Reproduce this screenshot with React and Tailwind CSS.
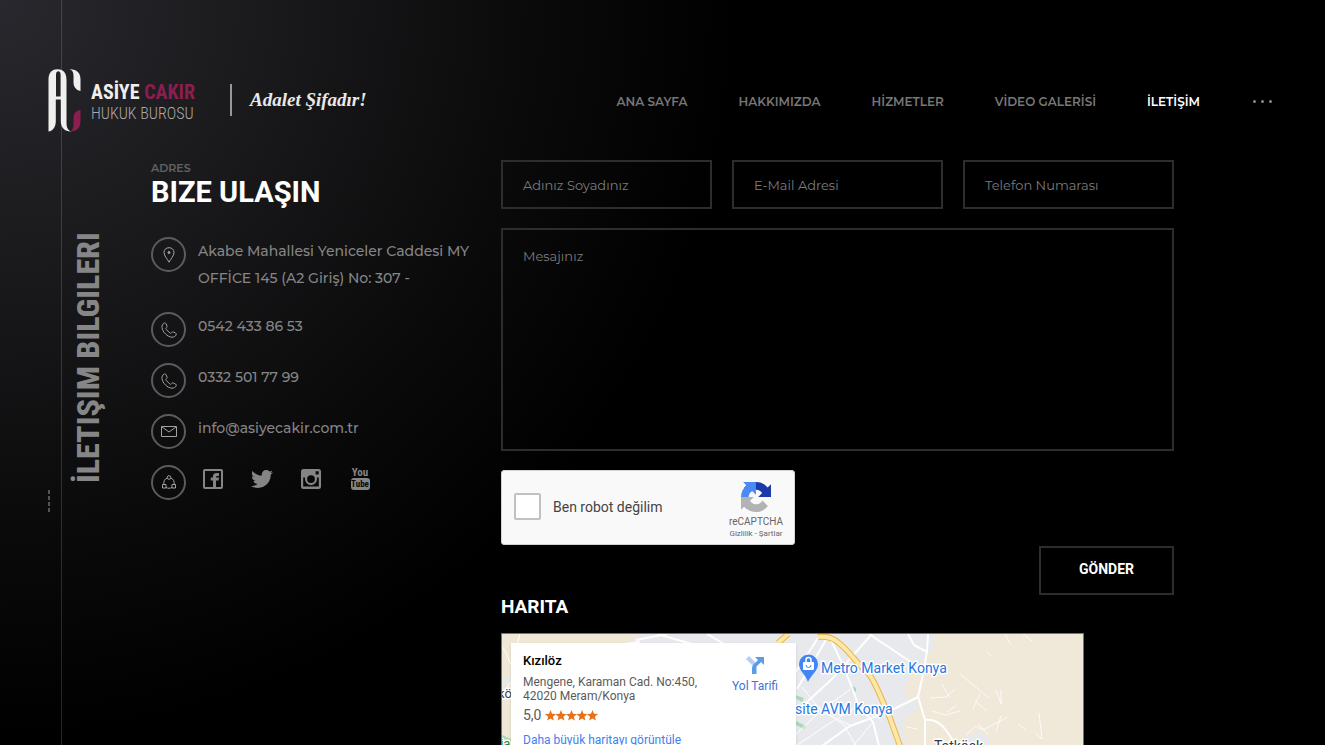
import React from "react";
import { FaTwitter } from "react-icons/fa";

const NAV = ["ANA SAYFA", "HAKKIMIZDA", "HİZMETLER", "VİDEO GALERİSİ", "İLETİŞİM"];

const condensed = "font-['Roboto_Condensed','Liberation_Sans_Narrow','Roboto',sans-serif]";
const field =
  "block w-full min-w-0 border-2 border-[#2d2d2d] bg-transparent px-5 text-[13px] text-[#8a8a8a] placeholder:text-[#7c7c7c] placeholder:opacity-100 outline-none";

function LogoMark() {
  return (
    <svg width="33" height="64" viewBox="0 0 33 64" aria-hidden="true">
      <path
        fill="#efefed"
        fillRule="evenodd"
        d="M.500 12C.500 4.500 4 1.300 9.500 1.300S18.500 4.500 18.500 12V55C18.500 59.500 20 62.500 23.500 63.500C17 63.800 12.800 60 12.800 53V31.500H7.800V53C7.800 59 5 63 .500 63.500ZM8 7V28.500H12.600V7C12.600 4 11.500 3.300 10.300 3.300S8 4 8 7Z"
      />
      <path d="M21.500 1.300C28.500 1 32.500 5 32.500 11V23C28 22 25.500 19 25.500 14V7.500C25.500 4 24 2 21.500 1.300Z" fill="#efefed" />
      <path d="M32.500 42V52C32.500 59.500 29.500 63.300 22.500 63.500C24.500 62 25.500 59.500 25.500 56V50C25.500 45.500 28 42.500 32.500 42Z" fill="#8c1d4f" />
    </svg>
  );
}

function Ring({ children }) {
  return (
    <span className="flex size-[35px] shrink-0 items-center justify-center rounded-full border-2 border-[#5b5b5d]">
      <svg width="16" height="16" viewBox="0 0 16 16" fill="none" stroke="#a2a2a2" strokeWidth="1" aria-hidden="true">
        {children}
      </svg>
    </span>
  );
}

const pin = (
  <>
    <path d="M8 15.200C6.500 12 3 9 3 5.500C3 2.500 5.200.700 8 .700S13 2.500 13 5.500C13 9 9.500 12 8 15.200Z" />
    <circle cx="8" cy="5.500" r="1" fill="#a2a2a2" />
  </>
);
const phone = (
  <path d="M3.300 1C1.500 2 .700 3.500 1 5.500C1.500 10 6.500 15 11 15.200C13 15.200 14.500 14.300 15.200 12.800C15.400 12 15.200 11.500 14.500 11L12.300 10C11.500 9.700 11 9.900 10.500 10.700C10 11.400 9.500 11.500 8.700 10.900L5.300 7.500C4.600 6.700 4.700 6.200 5.500 5.700C6.200 5.200 6.300 4.600 6 4L5 1.700C4.600 .900 4 .700 3.300 1Z" />
);
const mail = (
  <>
    <path d="M.500 2.500H15.500V12.500H.500Z" />
    <path d="M1 3L8 8L15 3" />
  </>
);
const share = (
  <>
    <circle cx="8" cy="2.500" r="1.800" />
    <path d="M1.500 9.500H5V13H1.500ZM11 9.500H14.500V13H11Z" />
    <path d="M6.200 3C3.700 4 2.500 6 2.800 9.500M9.800 3C12.300 4 13.500 6 13.200 9.500M5 12.500C7 13.500 9 13.500 11 12.500" />
  </>
);

function Contact({ icon, children }) {
  return (
    <li className="flex items-start gap-3">
      <Ring>{icon}</Ring>
      <div className="min-w-0 pt-px">{children}</div>
    </li>
  );
}

function Socials() {
  const link = "flex h-[26px] w-[22px] items-center justify-center";
  return (
    <div className="flex gap-[27px] pl-[4px] text-[#858585]">
      <a href="#facebook" aria-label="Facebook" className={link}>
        <svg width="20" height="20" viewBox="0 0 20 20">
          <rect x="1" y="1" width="18" height="18" rx="1" fill="none" stroke="currentColor" strokeWidth="2" />
          <path d="M10 19V11.500H7.700V8.500H10V7.500C10 5 11.500 3.800 16 4.200V7H14.500C13.500 7 13 7.300 13 8.500H16L15.600 11.500H13V19Z" fill="currentColor" />
        </svg>
      </a>
      <a href="#twitter" aria-label="Twitter" className={link}>
        <FaTwitter size={22} className="shrink-0" />
      </a>
      <a href="#instagram" aria-label="Instagram" className={link}>
        <svg width="20" height="20" viewBox="0 0 20 20">
          <path fillRule="evenodd" fill="currentColor" d="M2.500 0H17.500Q20 0 20 2.500V17.500Q20 20 17.500 20H2.500Q0 20 0 17.500V2.500Q0 0 2.500 0ZM14.600 2.300V5.600H17.700V2.300ZM2.200 8.500V17.600H17.800V8.500H15.900A6.100 6.100 0 1 1 4.100 8.500ZM10 6.200A3.900 3.900 0 1 0 10 14A3.900 3.900 0 1 0 10 6.200Z" />
        </svg>
      </a>
      <a href="#youtube" className={`${link} ${condensed} flex-col font-bold`}>
        <span className="text-[11px] leading-[10px]">You</span>
        <span className="flex h-3 w-[19px] shrink-0 items-center justify-center rounded-[3px] bg-[#858585] text-[9px] leading-3 text-[#090909]">Tube</span>
      </a>
    </div>
  );
}

function Recaptcha() {
  return (
    <div className="flex h-[75px] w-[294px] items-center rounded-[3px] border border-[#d3d3d3] bg-[#f9f9f9] pl-3 pr-[11px] font-['Roboto',sans-serif]">
      <label className="flex flex-1 items-center gap-3 pb-[2px] text-sm text-[#444]">
        <input type="checkbox" className="size-[27px] appearance-none rounded-[2px] border-2 border-[#c1c1c1] bg-white" />
        Ben robot değilim
      </label>
      <div className="flex flex-col items-center pt-[6px] text-[#666]">
        <svg width="30" height="30" viewBox="0 0 64 64" aria-hidden="true">
          <path fill="#1c3aa9" d="M64 31.955l-.033-1.370V4.687l-7.160 7.160C50.948 4.674 42.033.093 32.050.093c-10.400 0-19.622 4.960-25.458 12.640l11.736 11.860a15.550 15.550 0 0 1 4.754-5.334c2.050-1.600 4.952-2.906 8.968-2.906.485 0 .860.057 1.135.163 4.976.393 9.288 3.140 11.828 7.124l-8.307 8.307L64 31.953" />
          <path fill="#4a8af4" d="M31.862.094l-1.370.033H4.594l7.160 7.160C4.580 13.147 0 22.060 0 32.046c0 10.400 4.960 19.622 12.640 25.458L24.500 45.768a15.550 15.550 0 0 1-5.334-4.754c-1.600-2.050-2.906-4.952-2.906-8.968 0-.485.057-.860.163-1.135.393-4.976 3.140-9.288 7.124-11.828l8.307 8.307L31.860.095" />
          <path fill="#b3b3b3" d="M.001 32.045l.033 1.370v25.898l7.160-7.160c5.860 7.173 14.774 11.754 24.760 11.754 10.400 0 19.622-4.960 25.458-12.640l-11.736-11.860a15.550 15.550 0 0 1-4.754 5.334c-2.050 1.600-4.952 2.906-8.968 2.906-.485 0-.860-.057-1.135-.163-4.976-.393-9.288-3.140-11.828-7.124l8.307-8.307c-10.522.040-22.400.066-27.295-.005" />
        </svg>
        <span className="mt-1 text-[10px] leading-3">reCAPTCHA</span>
        <span className="text-[8px] leading-3">
          <a href="#gizlilik">Gizlilik</a> - <a href="#sartlar">Şartlar</a>
        </span>
      </div>
    </div>
  );
}

function MapArt() {
  return (
    <svg width="582" height="240" viewBox="0 0 582 240" className="block font-['Roboto',sans-serif]">
      <rect width="582" height="240" fill="#e8e9ed" />
      <path d="M0 0H138L125 12L60 60L8 42L0 46Z" fill="#efe8d6" />
      <path d="M0 52L9 50V240H0Z" fill="#efe8d6" />
      <path d="M433 0L431 17L423 22L420 34L409 38L406 48L402 56L405 66L417 66L414 77L403 84L401 94L405 112L400 240H582V0Z" fill="#f0e9d9" />
      <path d="M459 111L465 103L479 97L488 107V140H459Z" fill="#e8e9ed" />
      <g fill="#a8dab5">
        <path d="M293 61L302 64L300 68L293 64Z" />
        <path d="M294 87L304 92L302 95L294 91Z" />
        <path d="M349 51L354 54L354 58L349 56Z" />
        <path d="M0 101L9 105V115H0Z" />
      </g>
      <g fill="none" stroke="#fff">
        <g strokeWidth="2">
          <path d="M426 0L425 18L420 45L416 63L423 86V112V240" />
          <path d="M416 63L386 78L348 92L320 112" />
          <path d="M423 86C437 84 444 95 453 110L475 160" />
          <path d="M316 4L298 32L285 48M325 4L310 30L295 55" />
          <path d="M370 0L330 45L295 77L288 92" />
        </g>
        <g strokeWidth="2">
          <path d="M367 0L409 28M406 0L412 11L425 18" />
          <path d="M329 6L339 27L349 51L356 70L371 88L377 112" />
          <path d="M349 55L322 74L294 100M356 72L325 91L294 112M312 70L342 91L354 112" strokeWidth="1" />
          <path d="M371 88L352 111M300 53L320 78L350 92" strokeWidth="1" />
          <path d="M134 6L165 0M155 0L190 10M205 0L222 10M105 12L138 8" />
          <path d="M0 13C8 22 5 30 15 36M9 48L0 60M18 0L15 10" strokeWidth="1" />
        </g>
        <g strokeWidth="1" opacity=".8">
          <path d="M458 40L487 64M478 60L471 75M473 67L485 77M494 56L499 70L499 56M440 50L448 64M428 64L444 63L453 55M430 77L444 81L458 77M445 78L455 71M464 101L474 92L481 96L506 83M486 101L476 89M494 97L499 82M485 18L489 22M503 0L509 11M521 0L530 7M537 79L540 105L533 99M516 90L524 96M405 93L415 95" />
        </g>
      </g>
      <g fill="none">
        <path d="M316 3Q329 1 338 10C350 20 354 29 366 39C374 48 379 65 388 84L398 112L420 170M276 9L286 0" stroke="#e9b64c" strokeWidth="6" />
        <path d="M316 3Q329 1 338 10C350 20 354 29 366 39C374 48 379 65 388 84L398 112L420 170M276 9L286 0" stroke="#fee8a8" strokeWidth="4" />
      </g>
      <path d="M306 48C304 41 297 37 297 30A9.500 9.500 0 0 1 316 30C316 37 309 41 306 48Z" fill="#4285f4" />
      <rect x="301" y="28" width="11" height="8" rx="1" fill="#fff" />
      <path d="M304 29V26A2.500 2.500 0 0 1 309 26V29" fill="none" stroke="#fff" strokeWidth="1.500" />
      <path d="M304 31A2.500 2.500 0 0 0 309 31" fill="none" stroke="#4285f4" />
      <g fontSize="14" stroke="#fff" strokeWidth="3" strokeLinejoin="round" paintOrder="stroke">
        <text x="319" y="39" fill="#2878e0">Metro Market Konya</text>
        <text x="293" y="80" fill="#2878e0">site AVM Konya</text>
        <text x="432" y="117" fill="#333b45">Tatköşk</text>
        <text x="-4" y="64" fontSize="13" fill="#3c4043">kö</text>
        <text x="-9" y="114" fontSize="13" fill="#20804a">nia</text>
      </g>
    </svg>
  );
}

function MapCard() {
  return (
    <div className="absolute left-[9px] top-[9px] flex w-[285px] justify-between bg-white px-3 py-[10px] pr-[18px] font-['Roboto',sans-serif] shadow">
      <div className="text-xs leading-[14px] text-[#5b5b5b]">
        <h3 className="text-[13px] font-medium leading-4 text-black">Kızılöz</h3>
        <p className="mt-[6px]">Mengene, Karaman Cad. No:450,<br />42020 Meram/Konya</p>
        <p className="mt-[3px] flex items-center text-sm leading-[18px]">
          5,0
          <svg className="ml-[3px]" width="53" height="11" viewBox="0 0 53 11" fill="#e7711b" role="img" aria-label="5 yıldız">
            {[0, 10.5, 21, 31.5, 42].map((x) => (
              <path key={x} transform={`translate(${x} 0)`} d="M5.500 0L7 3.800L11 4.100L7.900 6.700L8.900 10.600L5.500 8.400L2.100 10.600L3.100 6.700L0 4.100L4 3.800Z" />
            ))}
          </svg>
        </p>
        <a href="#harita" className="mt-[9px] block text-[#427fed]">Daha büyük haritayı görüntüle</a>
      </div>
      <a href="#yol" className="flex flex-col items-center text-xs leading-[14px] text-[#4272db]">
        <svg className="mt-[3px]" width="18" height="18" viewBox="0 0 18 18" aria-hidden="true">
          <path d="M0 3L3 0L10 7L8 11Z" fill="#b3cff5" />
          <path d="M6 18V12Q6 10 7.500 8.500L12 4L9 1H18V9L15 6L10.500 10.500V18Z" fill="#5b9be8" />
        </svg>
        <span className="mt-[5px]">Yol Tarifi</span>
      </a>
    </div>
  );
}

export default function App() {
  return (
    <div className="relative flex h-screen flex-col overflow-hidden bg-black bg-[radial-gradient(circle_740px_at_0_0,#29282e_0%,#19191b_38%,#0a0a0b_72%,#000_100%)] font-['Montserrat','Inter',sans-serif] text-white">
      <div className="pointer-events-none absolute inset-y-0 left-[61px] w-px bg-white/15" />

      <header className="relative flex h-40 shrink-0 items-start pl-12 pr-[53px] pt-[68px]">
        <a href="#home" className="flex h-16 items-center">
          <LogoMark />
          <span className={`ml-[10px] block w-[107px] whitespace-nowrap pt-[6px] ${condensed}`}>
            <span className="block text-xl font-bold leading-[22px] text-[#efefed]">
              ASİYE <span className="text-[#8c1d4f]">CAKIR</span>
            </span>
            <span className="block text-base font-light leading-[22px] text-[#a9a9ab]">HUKUK BUROSU</span>
          </span>
          <span className="ml-8 h-8 w-[2px] bg-[#98979a]" />
          <span className="ml-[18px] whitespace-nowrap font-['Liberation_Serif',serif] text-[19px] font-bold italic text-[#e9e9e9]">Adalet Şifadır!</span>
        </a>
        <nav className="ml-auto flex h-[67px] items-center gap-[51px] whitespace-nowrap text-xs font-semibold text-[#777]">
          {NAV.map((n, i) => (
            <a key={n} href={`#${i}`} className={i === 4 ? "text-white" : ""}>{n}</a>
          ))}
          <button aria-label="Menü" className="ml-[2px] flex gap-[5px]">
            <i className="size-[3px] rounded-full bg-[#888]" />
            <i className="size-[3px] rounded-full bg-[#888]" />
            <i className="size-[3px] rounded-full bg-[#888]" />
          </button>
        </nav>
      </header>

      <main className="relative flex min-h-0 flex-1 items-start">
        <div className="flex w-[151px] shrink-0 pl-12 pt-[73px]">
          <div className="mt-[257px] flex w-[2px] flex-col gap-[2px]">
            <i className="h-1 bg-[#555]" />
            <i className="h-1 bg-[#555]" />
            <i className="h-1 bg-[#555]" />
            <i className="h-1 bg-[#555]" />
          </div>
          <h1 className={`ml-[18px] h-[250px] rotate-180 whitespace-nowrap text-[32px] font-extrabold leading-10 text-[#868687] [writing-mode:vertical-rl] ${condensed}`}>
            İLETIŞIM BILGILERI
          </h1>
        </div>

        <section className="w-[350px] shrink-0">
          <p className="text-[11px] font-semibold leading-4 text-[#626265]">ADRES</p>
          <h2 className="font-['Roboto',sans-serif] text-[29px] font-bold leading-8">BIZE ULAŞIN</h2>
          <ul className="mt-[29px] flex flex-col gap-4 text-sm font-medium leading-[27px] text-[#858586]">
            <Contact icon={pin}>
              <p className="mb-1">Akabe Mahallesi Yeniceler Caddesi MY<br />OFFİCE 145 (A2 Giriş) No: 307 -</p>
            </Contact>
            <Contact icon={phone}><a href="tel:05424338653">0542 433 86 53</a></Contact>
            <Contact icon={phone}><a href="tel:03325017799">0332 501 77 99</a></Contact>
            <Contact icon={mail}><a href="mailto:info@asiyecakir.com.tr">info@asiyecakir.com.tr</a></Contact>
            <Contact icon={share}><Socials /></Contact>
          </ul>
        </section>

        <section className="min-w-0 flex-1 pr-[151px]">
          <form onSubmit={(e) => e.preventDefault()}>
            <div className="grid grid-cols-3 gap-5">
              <input className={`${field} h-[49px]`} aria-label="Adınız Soyadınız" placeholder="Adınız Soyadınız" />
              <input className={`${field} h-[49px]`} type="email" aria-label="E-Mail Adresi" placeholder="E-Mail Adresi" />
              <input className={`${field} h-[49px]`} type="tel" aria-label="Telefon Numarası" placeholder="Telefon Numarası" />
            </div>
            <textarea className={`${field} mt-[19px] h-[223px] resize-none py-4 leading-5`} aria-label="Mesajınız" placeholder="Mesajınız" />
            <div className="mt-[19px]"><Recaptcha /></div>
            <div className="mt-px flex items-end justify-between">
              <h2 className="-mb-6 font-['Roboto',sans-serif] text-[19px] font-bold leading-6">HARITA</h2>
              <button className="h-[49px] w-[135px] border-2 border-[#2d2d2d] pb-1 font-['Roboto',sans-serif] text-sm font-bold">GÖNDER</button>
            </div>
          </form>
          <div id="harita" className="relative mt-[38px] max-w-[583px] overflow-hidden border border-[#77746c]">
            <MapArt />
            <MapCard />
          </div>
        </section>
      </main>
    </div>
  );
}
